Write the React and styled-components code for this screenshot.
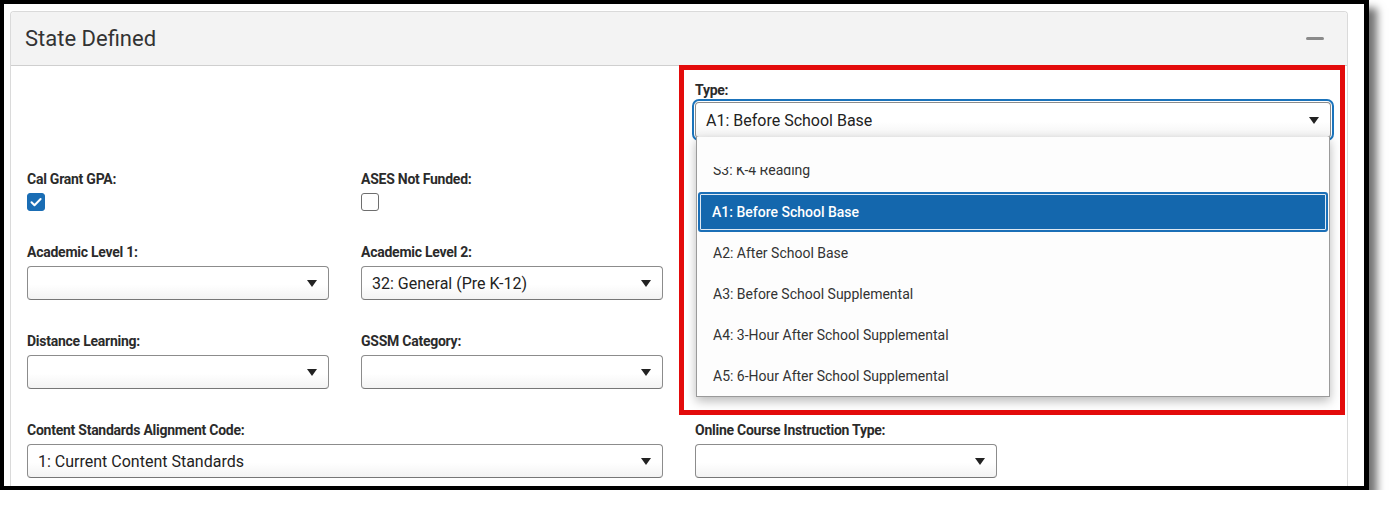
import styled, { createGlobalStyle } from "styled-components";

const GlobalStyle = createGlobalStyle`
  html, body {
    margin: 0;
    background: #fff;
  }
  body {
    font-family: Roboto, "Noto Sans", Arial, sans-serif;
    color: #333;
  }
  * { box-sizing: border-box; }
`;

const Frame = styled.div`
  width: 1369px;
  height: 490px;
  border: 4px solid #000;
  border-right-width: 5px;
  background: #fff;
  box-shadow: 8px 8px 8px rgba(0, 0, 0, 0.55);
  padding: 7px 16px 0 6px;
  overflow: hidden;
`;

const Panel = styled.section`
  border: 1px solid #dadada;
  border-bottom: none;
  border-radius: 4px 4px 0 0;
  height: 100%;
`;

const Header = styled.header`
  height: 54px;
  background: #f3f3f3;
  border-bottom: 1px solid #cfcfcf;
  border-radius: 4px 4px 0 0;
  display: flex;
  align-items: center;
  justify-content: space-between;
  padding: 0 23px 0 14px;
`;

const Title = styled.h2`
  margin: 0;
  font-size: 22px;
  font-weight: 400;
  color: #333;
`;

const Collapse = styled.button`
  width: 18px;
  height: 3px;
  padding: 0;
  border: none;
  border-radius: 2px;
  background: #8a8a8a;
  cursor: pointer;
`;

const Body = styled.div`
  display: grid;
  grid-template-columns: repeat(4, 302px);
  column-gap: 32px;
  row-gap: 33px;
  padding: 16px 16px 0 16px;
  align-items: start;
`;

const Field = styled.div`
  position: relative;
  grid-column: ${(p) => p.$col} / span ${(p) => p.$span || 1};
  grid-row: ${(p) => p.$row};
  display: flex;
  flex-direction: column;
  gap: ${(p) => p.$gap ?? 6}px;
`;

const Label = styled.label`
  font-size: 14px;
  line-height: 16px;
  font-weight: 700;
  color: #2b2b2b;
  letter-spacing: -0.25px;
`;

const SelectBox = styled.div`
  position: relative;
  height: ${(p) => (p.$focused ? 36 : 34)}px;
  display: flex;
  align-items: center;
  justify-content: space-between;
  padding: 0 11px 0 10px;
  border: 1px solid #8c8c8c;
  border-bottom-color: #777;
  border-radius: 4px;
  background: linear-gradient(to bottom, #fff 55%, #f3f3f3);
  font-size: 16px;
  color: #222;
  ${(p) =>
    p.$focused &&
    `
    outline: 2px solid #1b73bb;
    outline-offset: 1px;
  `}
`;

const Check = styled.span`
  width: 18px;
  height: 18px;
  border-radius: 3px;
  display: flex;
  align-items: center;
  justify-content: center;
  background: ${(p) => (p.$checked ? "#1a6db4" : "#fff")};
  border: 1px solid ${(p) => (p.$checked ? "#1a6db4" : "#6e6e6e")};
`;

const Highlight = styled.div`
  position: absolute;
  left: -16px;
  top: -17px;
  width: 666px;
  height: 350px;
  border: 5px solid #e30b0b;
  pointer-events: none;
  z-index: 3;
`;

const ListBox = styled.ul`
  position: absolute;
  left: 0;
  right: 0;
  top: 100%;
  margin: 0;
  padding: 0;
  list-style: none;
  background: #fdfdfd;
  border: 1px solid #9a9a9a;
  border-top: none;
  box-shadow: 0 4px 10px rgba(0, 0, 0, 0.28);
  z-index: 2;
`;

const ScrollGap = styled.li`
  height: 30px;
`;

const Option = styled.li`
  height: ${(p) => (p.$selected ? "40px" : "41px")};
  display: flex;
  align-items: center;
  padding-left: ${(p) => (p.$selected ? "12px" : "16px")};
  font-size: 14px;
  color: ${(p) => (p.$selected ? "#fff" : "#333")};
  font-weight: ${(p) => (p.$selected ? 500 : 400)};
  ${(p) =>
    p.$selected &&
    `
    margin: 0 1px;
    border: 2px solid #1b6fb7;
    border-radius: 3px;
    background: #1467ad;
    box-shadow: inset 0 0 0 1px #dfe9f3;
  `}
`;

const ClippedOption = styled.li`
  height: 25px;
  overflow: hidden;
  padding-left: 16px;
  font-size: 14px;
  color: #333;
  span {
    display: block;
    line-height: 17px;
    margin-top: -5px;
  }
`;

function Caret() {
  return (
    <svg width="10" height="7" viewBox="0 0 10 7">
      <polygon points="0,0 10,0 5,7" fill="#222" />
    </svg>
  );
}

function Select({ value, focused, children }) {
  return (
    <SelectBox $focused={focused} role="combobox">
      <span>{value}</span>
      <Caret />
      {children}
    </SelectBox>
  );
}

function CheckBox({ checked }) {
  return (
    <Check $checked={checked} role="checkbox" aria-checked={checked}>
      {checked && (
        <svg width="14" height="14" viewBox="0 0 14 14">
          <path d="M2.5 7.2l3 3L11.6 4" fill="none" stroke="#fff" strokeWidth="2" strokeLinecap="round" strokeLinejoin="round" />
        </svg>
      )}
    </Check>
  );
}

const typeOptions = [
  "A2: After School Base",
  "A3: Before School Supplemental",
  "A4: 3-Hour After School Supplemental",
  "A5: 6-Hour After School Supplemental",
];

export default function App() {
  return (
    <>
      <GlobalStyle />
      <Frame>
        <Panel>
          <Header>
            <Title>State Defined</Title>
            <Collapse aria-label="Collapse" />
          </Header>
          <Body>
            <Field $col={3} $span={2} $row={1} $gap={4}>
              <Highlight />
              <Label>Type:</Label>
              <Select value="A1: Before School Base" focused>
                <ListBox role="listbox">
                  <ScrollGap />
                  <ClippedOption>
                    <span>S3: K-4 Reading</span>
                  </ClippedOption>
                  <Option $selected>A1: Before School Base</Option>
                  {typeOptions.map((o) => (
                    <Option key={o}>{o}</Option>
                  ))}
                </ListBox>
              </Select>
            </Field>

            <Field $col={1} $row={2}>
              <Label>Cal Grant GPA:</Label>
              <CheckBox checked />
            </Field>
            <Field $col={2} $row={2}>
              <Label>ASES Not Funded:</Label>
              <CheckBox />
            </Field>

            <Field $col={1} $row={3}>
              <Label>Academic Level 1:</Label>
              <Select value="" />
            </Field>
            <Field $col={2} $row={3}>
              <Label>Academic Level 2:</Label>
              <Select value="32: General (Pre K-12)" />
            </Field>

            <Field $col={1} $row={4}>
              <Label>Distance Learning:</Label>
              <Select value="" />
            </Field>
            <Field $col={2} $row={4}>
              <Label>GSSM Category:</Label>
              <Select value="" />
            </Field>

            <Field $col={1} $span={2} $row={5}>
              <Label>Content Standards Alignment Code:</Label>
              <Select value="1: Current Content Standards" />
            </Field>
            <Field $col={3} $row={5}>
              <Label>Online Course Instruction Type:</Label>
              <Select value="" />
            </Field>
          </Body>
        </Panel>
      </Frame>
    </>
  );
}
